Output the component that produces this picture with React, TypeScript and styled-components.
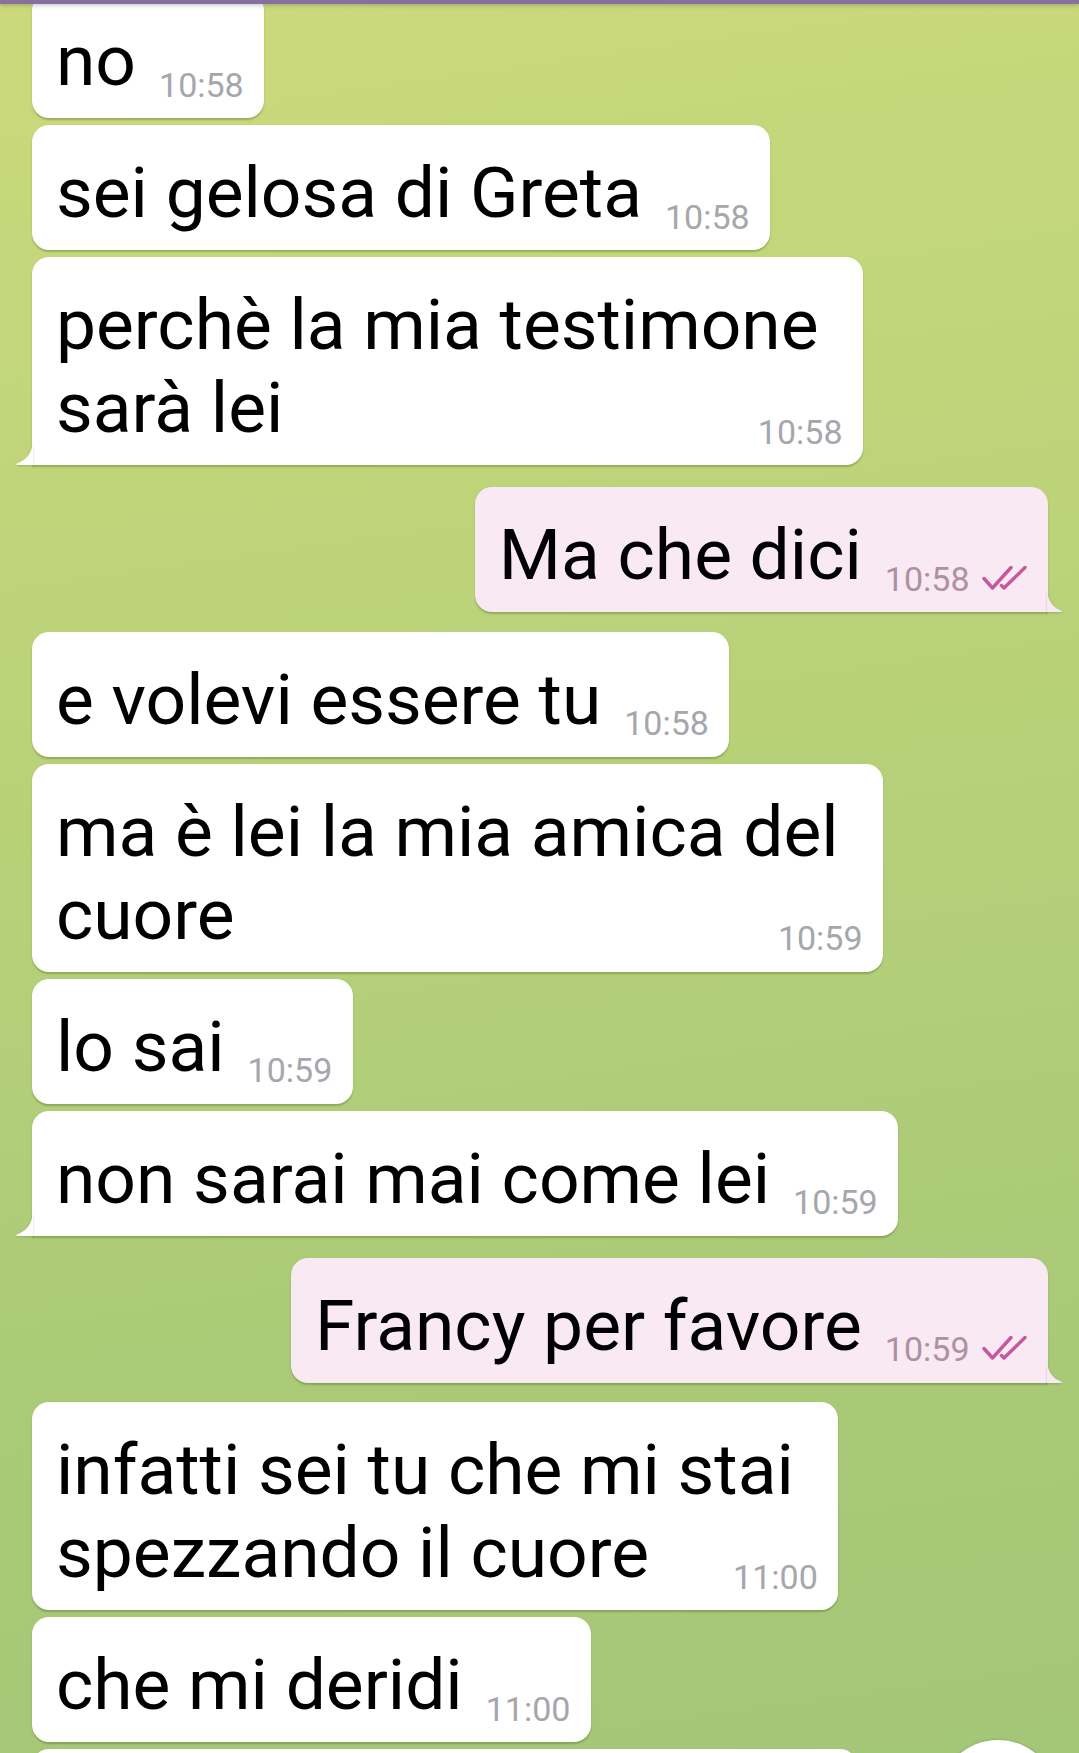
import * as React from 'react';
import type { FunctionComponent } from 'react';
import styled, { createGlobalStyle } from 'styled-components';

type Side = 'in' | 'out';

type Message = {
  side: Side;
  lines: string[];
  time: string;
  tail?: boolean;
  width?: number;
};

const messages: Message[] = [
  { side: 'in', lines: ['no'], time: '10:58' },
  { side: 'in', lines: ['sei gelosa di Greta'], time: '10:58' },
  { side: 'in', lines: ['perchè la mia testimone', 'sarà lei'], time: '10:58', tail: true },
  { side: 'out', lines: ['Ma che dici'], time: '10:58', tail: true },
  { side: 'in', lines: ['e volevi essere tu'], time: '10:58' },
  { side: 'in', lines: ['ma è lei la mia amica del', 'cuore'], time: '10:59' },
  { side: 'in', lines: ['lo sai'], time: '10:59' },
  { side: 'in', lines: ['non sarai mai come lei'], time: '10:59', tail: true },
  { side: 'out', lines: ['Francy per favore'], time: '10:59', tail: true },
  { side: 'in', lines: ['infatti sei tu che mi stai', 'spezzando il cuore'], time: '11:00' },
  { side: 'in', lines: ['che mi deridi'], time: '11:00' },
  { side: 'in', lines: [], time: '', width: 825 },
];

// spacing above each bubble: tight inside a group, wider after a tailed bubble
const getGap = (i: number): number => {
  if (i === 0) return -11;
  const prev = messages[i - 1];
  if (!prev.tail) return 7;
  return prev.side === 'in' ? 22 : 19.5;
};

const Ticks: FunctionComponent = () => (
  <TickSvg width='46' height='26' viewBox='0 0 46 26'>
    <path d='M2 13.5 L10.5 23 L29 2.5' />
    <path d='M19.5 20.5 L22 23 L43 2.5' />
  </TickSvg>
);

const Tail: FunctionComponent<{ side: Side }> = ({ side }) =>
  side === 'in' ? (
    <TailSvg $side={side} width='18' height='28' viewBox='0 0 18 28'>
      <path d='M18 0 C18 12 15 21.5 2.5 26.2 C0.6 26.9 0.8 28 2.5 28 L18.5 28 Z' />
    </TailSvg>
  ) : (
    <TailSvg $side={side} width='16' height='26' viewBox='0 0 16 26'>
      <path d='M0 0 C0 11 2.6 19.8 13.6 24.3 C15.3 25 15.1 26 13.6 26 L-0.5 26 Z' />
    </TailSvg>
  );

const Bubble: FunctionComponent<{ msg: Message }> = ({ msg }) => {
  const multi = msg.lines.length > 1;
  return (
    <Box $side={msg.side} $tail={msg.tail} style={msg.width ? { width: msg.width } : undefined}>
      {msg.lines.length > 0 && (
        <Text $multi={multi}>
          {msg.lines.map((line, i) => (
            <div key={i}>{line}</div>
          ))}
        </Text>
      )}
      {msg.time && (
        <Meta $multi={multi}>
          <Time $side={msg.side}>{msg.time}</Time>
          {msg.side === 'out' && <Ticks />}
        </Meta>
      )}
      {msg.tail && <Tail side={msg.side} />}
    </Box>
  );
};

const App: FunctionComponent = () => (
  <Page>
    <GlobalStyle />
    <TopBar />
    <Chat>
      {messages.map((msg, i) => (
        <Row key={i} $side={msg.side} $gap={getGap(i)}>
          <Bubble msg={msg} />
        </Row>
      ))}
    </Chat>
    <ScrollButton />
  </Page>
);

export default App;

const GlobalStyle = createGlobalStyle`
  html, body {
    margin: 0;
    padding: 0;
  }
  body {
    font-family: Roboto, 'Noto Sans', 'Liberation Sans', sans-serif;
    -webkit-font-smoothing: antialiased;
  }
`;

const Page = styled.div`
  position: relative;
  display: flex;
  flex-direction: column;
  width: 1079px;
  height: 1753px;
  overflow: hidden;
  background: linear-gradient(172deg, #cbd97b 0%, #c0d57a 25%, #b5d079 50%, #aaca77 75%, #a4c677 100%);
`;

const TopBar = styled.div`
  position: relative;
  z-index: 2;
  flex: 0 0 4px;
  height: 4px;
  background: #86709e;
  box-shadow: 0 1px 4px rgba(60, 50, 80, 0.35);
`;

const Chat = styled.div`
  display: flex;
  flex-direction: column;
  flex: 1;
  padding: 0 31px 0 32px;
  overflow: hidden;
`;

const Row = styled.div<{ $side: Side; $gap: number }>`
  display: flex;
  flex-shrink: 0;
  justify-content: ${(p) => (p.$side === 'out' ? 'flex-end' : 'flex-start')};
  margin-top: ${(p) => p.$gap}px;
`;

const Box = styled.div<{ $side: Side; $tail?: boolean }>`
  position: relative;
  display: grid;
  grid-template-columns: auto auto;
  align-items: end;
  box-sizing: border-box;
  min-height: 125px;
  padding: 26px 20.5px 16px 24px;
  background: ${(p) => (p.$side === 'out' ? '#f9e9f2' : '#ffffff')};
  border-radius: 17px;
  ${(p) => p.$tail && p.$side === 'in' && 'border-bottom-left-radius: 0;'}
  ${(p) => p.$tail && p.$side === 'out' && 'border-bottom-right-radius: 0;'}
  box-shadow: 0 1.5px 1.5px rgba(70, 100, 30, 0.35);
`;

const Text = styled.div<{ $multi: boolean }>`
  grid-row: 1;
  grid-column: ${(p) => (p.$multi ? '1 / -1' : '1')};
  padding-right: ${(p) => (p.$multi ? '24px' : '0')};
  color: #000;
  font-size: 71.3px;
  line-height: 83px;
  white-space: nowrap;
`;

const Meta = styled.div<{ $multi: boolean }>`
  grid-row: 1;
  grid-column: 2;
  justify-self: end;
  display: flex;
  align-items: flex-end;
  margin-left: ${(p) => (p.$multi ? '0' : '23px')};
  margin-bottom: 0.5px;
`;

const Time = styled.span<{ $side: Side }>`
  font-size: 34px;
  line-height: 34px;
  color: ${(p) => (p.$side === 'out' ? '#ad91a3' : '#a6a6ad')};
  white-space: nowrap;
`;

const TickSvg = styled.svg`
  flex-shrink: 0;
  margin: 0 0 5px 12px;
  fill: none;
  stroke: #c8579d;
  stroke-width: 3.4;
  stroke-linecap: round;
  stroke-linejoin: round;
`;

const TailSvg = styled.svg<{ $side: Side }>`
  position: absolute;
  bottom: 0;
  ${(p) => (p.$side === 'in' ? 'left: -17px;' : 'right: -15px;')}
  fill: ${(p) => (p.$side === 'out' ? '#f9e9f2' : '#ffffff')};
  filter: drop-shadow(0 1.5px 0.8px rgba(70, 100, 30, 0.3));
`;

const ScrollButton = styled.div`
  position: absolute;
  top: 1740px;
  right: 21px;
  width: 120px;
  height: 120px;
  border-radius: 50%;
  background: #ffffff;
  box-shadow: 0 0 3px rgba(60, 80, 30, 0.25);
`;
